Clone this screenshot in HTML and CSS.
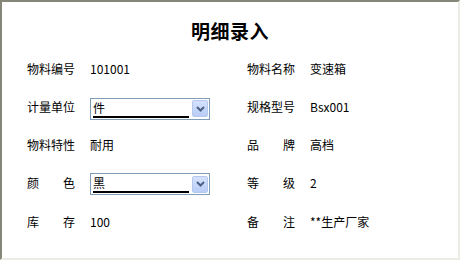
FILE: index.html
```html
<!DOCTYPE html>
<html lang="zh-CN">
<head>
    <meta charset="UTF-8">
    <title>明细录入</title>
    <link rel="stylesheet" href="styles.css">
</head>
<body>
    <div class="frame">
        <h1 class="title">明细录入</h1>
        <div class="form">
            <div class="field">
                <span class="label">物料编号</span>
                <span class="value">101001</span>
            </div>
            <div class="field">
                <span class="label">物料名称</span>
                <span class="value">变速箱</span>
            </div>

            <div class="field">
                <span class="label">计量单位</span>
                <div class="combo">
                    <span class="combo-text">件</span>
                    <span class="combo-btn">
                        <svg width="9" height="6" viewBox="0 0 9 6"><path d="M1 1 L4.5 4.5 L8 1" fill="none" stroke="#4d6185" stroke-width="2"/></svg>
                    </span>
                </div>
            </div>
            <div class="field">
                <span class="label">规格型号</span>
                <span class="value">Bsx001</span>
            </div>

            <div class="field">
                <span class="label">物料特性</span>
                <span class="value">耐用</span>
            </div>
            <div class="field">
                <span class="label">品牌</span>
                <span class="value">高档</span>
            </div>

            <div class="field">
                <span class="label">颜色</span>
                <div class="combo">
                    <span class="combo-text">黑</span>
                    <span class="combo-btn">
                        <svg width="9" height="6" viewBox="0 0 9 6"><path d="M1 1 L4.5 4.5 L8 1" fill="none" stroke="#4d6185" stroke-width="2"/></svg>
                    </span>
                </div>
            </div>
            <div class="field">
                <span class="label">等级</span>
                <span class="value">2</span>
            </div>

            <div class="field">
                <span class="label">库存</span>
                <span class="value">100</span>
            </div>
            <div class="field">
                <span class="label">备注</span>
                <span class="value">**生产厂家</span>
            </div>
        </div>
    </div>
</body>
</html>
```

FILE: styles.css
```css
* {
    margin: 0;
    padding: 0;
    box-sizing: border-box;
}

body {
    background: #ffffff;
    color: #000000;
    font-family: "Noto Sans CJK SC", "Liberation Sans", sans-serif;
    font-size: 12px;
}

.frame {
    width: 460px;
    height: 260px;
    border-top: 2px solid #878779;
    border-left: 2px solid #878779;
    border-right: 2px solid #ecebe4;
    border-bottom: 2px solid #ecebe4;
    background: #ffffff;
}

.title {
    font-size: 19px;
    font-weight: bold;
    line-height: 20px;
    text-align: center;
    padding: 19px 0 8px;
    letter-spacing: 0.5px;
}

.form {
    display: grid;
    grid-template-columns: 220px 1fr;
    grid-template-rows: 39px 38px 37px 39px 40px;
    padding-left: 25px;
}

.field {
    display: flex;
    align-items: center;
}

.label {
    width: 48px;
    margin-right: 15px;
    text-align: justify;
    text-align-last: justify;
    line-height: 14px;
}

.value {
    line-height: 14px;
}

.combo {
    display: flex;
    align-items: center;
    width: 120px;
    height: 22px;
    margin-top: 3px;
    border: 1px solid #7f9db9;
    background: #ffffff;
    padding: 1px 1px 1px 2px;
}

.combo-text {
    flex: 1;
    height: 18px;
    line-height: 14px;
    padding-top: 1px;
    border-bottom: 2px solid #000000;
    margin-right: 3px;
}

.combo-btn {
    width: 16px;
    height: 17px;
    display: flex;
    align-items: center;
    justify-content: center;
    background: linear-gradient(#d6e2fc, #b9cdf6);
    border: 1px solid #b5c8f0;
    border-radius: 2px;
}
```
